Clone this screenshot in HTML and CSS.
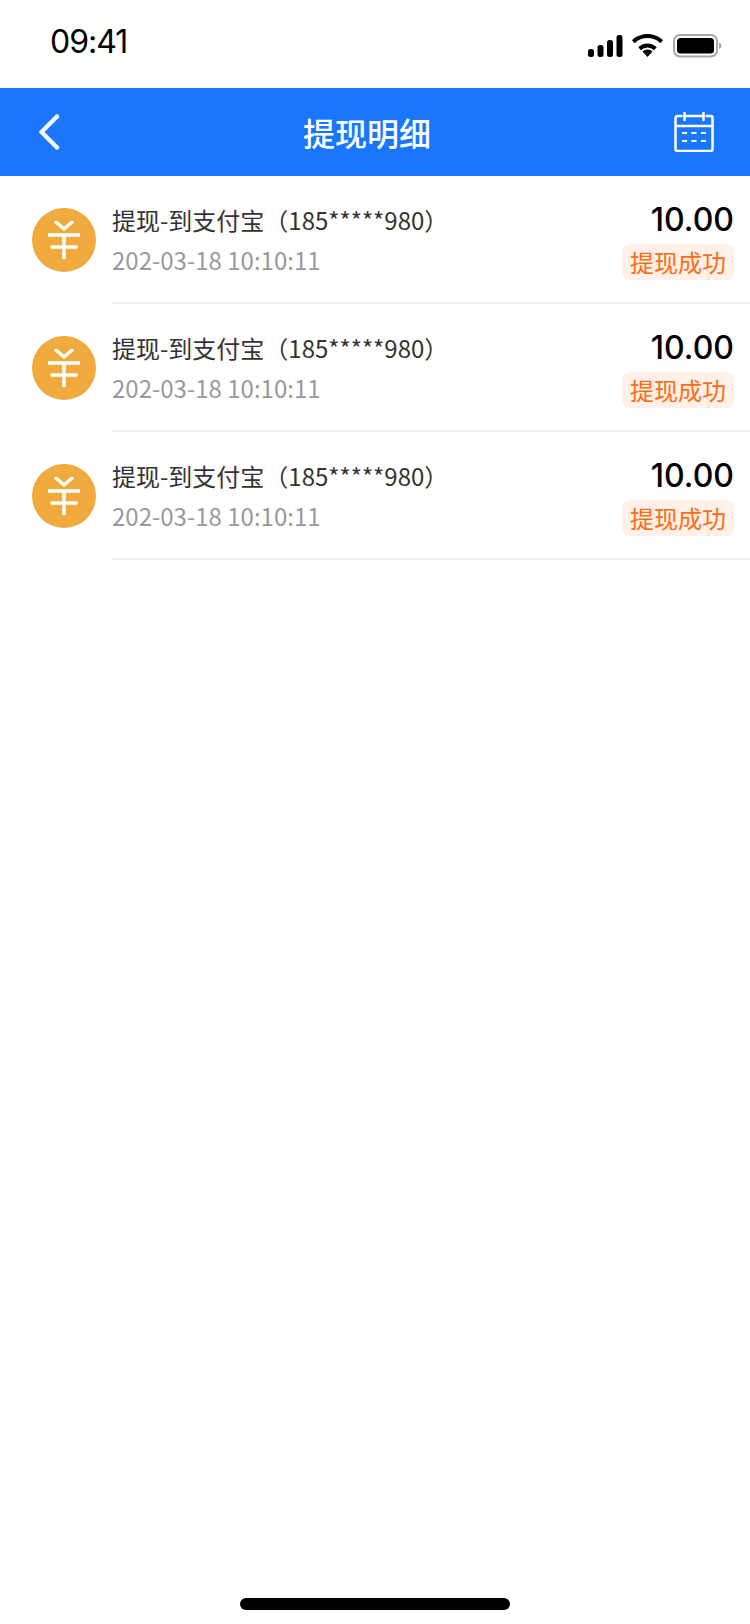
FILE: index.html
```html
<!DOCTYPE html>
<html lang="zh">
    <head>
        <meta charset="UTF-8">
        <title>提现明细</title>
        <link rel="stylesheet" href="styles.css">
    </head>
    <body>
        <div class="page">
            <div class="status">
                <span class="time">09:41</span>
                <div class="status-icons">
                    <svg class="signal" width="35" height="22" viewBox="0 0 35 22">
                        <rect x="0" y="14" width="6" height="8" rx="2.5"/>
                        <rect x="9.5" y="10" width="6" height="12" rx="2.5"/>
                        <rect x="19" y="5" width="6" height="17" rx="2.5"/>
                        <rect x="28.5" y="0" width="6" height="22" rx="2.5"/>
                    </svg>
                    <svg class="wifi" width="31" height="23" viewBox="0 0 31 23">
                        <path d="M15.5 23l-5-5.6a7.2 7.2 0 0 1 10 0z"/>
                        <path d="M15.5 9.6c3.6 0 6.8 1.4 9.2 3.7l-2.6 2.9a9.6 9.6 0 0 0-13.2 0l-2.6-2.9c2.4-2.3 5.6-3.7 9.2-3.7z"/>
                        <path d="M15.5 0c6 0 11.400 2.300 15.500 6.200l-2.700 3a18.600 18.600 0 0 0-25.600 0L0 6.200C4.100 2.300 9.500 0 15.500 0z"/>
                    </svg>
                    <svg class="battery" width="49" height="24" viewBox="0 0 49 24">
                        <rect x="1" y="1" width="43" height="21.500" rx="6" fill="none" stroke="#a8a8a8" stroke-width="2"/>
                        <rect x="4" y="4" width="37" height="15.500" rx="3.500"/>
                        <path d="M46 8.500c1.500.5 2.500 1.700 2.500 3.300s-1 2.700-2.500 3.200z" fill="#a8a8a8"/>
                    </svg>
                </div>
            </div>
            <div class="nav">
                <svg class="back" width="22" height="36" viewBox="0 0 22 36">
                    <path d="M19 2.500L3.500 18 19 33.500"/>
                </svg>
                <h1 class="nav-title">提现明细</h1>
                <svg class="calendar" width="40" height="40" viewBox="0 0 40 40">
                    <path class="cal-line" d="M7.500 4H3.500a2 2 0 0 0-2 2v31a2 2 0 0 0 2 2h33a2 2 0 0 0 2-2V6a2 2 0 0 0-2-2h-4M12.500 4h15M1.500 14h37M10.500 1v7M29.500 1v7"/>
                    <path class="cal-dash" d="M8 21h5M17.500 21h5M27 21h5M8 29h5M17.500 29h5M27 29h5"/>
                </svg>
            </div>
            <ul class="list">
                <li class="row">
                    <div class="coin">
                        <svg width="32" height="38" viewBox="0 0 32 38"><path d="M8 1l8 7 8-7M1 14h30M4 26h24M16 14v23"/></svg>
                    </div>
                    <div class="row-body">
                        <div class="row-left">
                            <p class="row-title">提现-到支付宝（185*****980）</p>
                            <p class="row-date">202-03-18 10:10:11</p>
                        </div>
                        <div class="row-right">
                            <span class="amount">10.00</span>
                            <span class="tag">提现成功</span>
                        </div>
                    </div>
                </li>
                <li class="row">
                    <div class="coin">
                        <svg width="32" height="38" viewBox="0 0 32 38"><path d="M8 1l8 7 8-7M1 14h30M4 26h24M16 14v23"/></svg>
                    </div>
                    <div class="row-body">
                        <div class="row-left">
                            <p class="row-title">提现-到支付宝（185*****980）</p>
                            <p class="row-date">202-03-18 10:10:11</p>
                        </div>
                        <div class="row-right">
                            <span class="amount">10.00</span>
                            <span class="tag">提现成功</span>
                        </div>
                    </div>
                </li>
                <li class="row">
                    <div class="coin">
                        <svg width="32" height="38" viewBox="0 0 32 38"><path d="M8 1l8 7 8-7M1 14h30M4 26h24M16 14v23"/></svg>
                    </div>
                    <div class="row-body">
                        <div class="row-left">
                            <p class="row-title">提现-到支付宝（185*****980）</p>
                            <p class="row-date">202-03-18 10:10:11</p>
                        </div>
                        <div class="row-right">
                            <span class="amount">10.00</span>
                            <span class="tag">提现成功</span>
                        </div>
                    </div>
                </li>
            </ul>
            <div class="home-bar"></div>
        </div>
    </body>
</html>
```

FILE: styles.css
```css
*{
    margin:0;
    padding:0;
    box-sizing:border-box;
}
ul,ol{
    list-style:none;
}
html,body{
    height:100%;
    background-color:#fff;
}
body{
    font-family:"Noto Sans CJK SC","Noto Sans",sans-serif;
}
.page{
    width:750px;
    height:1624px;
    display:flex;
    flex-direction:column;
}
.status{
    height:88px;
    display:flex;
    justify-content:space-between;
    align-items:flex-start;
    padding:0 28px 0 50px;
}
.time{
    font-family:Inter,"Noto Sans",sans-serif;
    font-size:32px;
    line-height:40px;
    margin-top:22px;
    letter-spacing:-1px;
    color:#000;
}
.status-icons{
    display:flex;
    align-items:flex-start;
    margin-top:34px;
}
.signal{
    margin:1px 9px 0 0;
}
.wifi{
    margin-right:10px;
}
.nav{
    height:88px;
    background-color:#1a76ff;
    display:flex;
    align-items:center;
    justify-content:space-between;
    padding:0 36px 0 38px;
}
.back path{
    fill:none;
    stroke:#f0f4fb;
    stroke-width:4.500;
    stroke-linecap:round;
    stroke-linejoin:round;
}
.nav-title{
    font-size:32px;
    font-weight:500;
    color:#fff;
    line-height:44px;
}
.calendar{
    fill:none;
    stroke:#fff;
}
.cal-line{
    stroke-width:2.500;
    stroke-linecap:round;
}
.cal-dash{
    stroke-width:2;
}
.row{
    height:128px;
    display:flex;
    padding-left:32px;
}
.coin{
    width:64px;
    height:64px;
    margin-top:32px;
    border-radius:50%;
    background-color:#f0aa3e;
    display:flex;
    align-items:center;
    justify-content:center;
    flex-shrink:0;
}
.coin svg{
    fill:none;
    stroke:#fff;
    stroke-width:3.500;
    stroke-linecap:round;
    stroke-linejoin:round;
}
.row-body{
    flex:1;
    margin-left:16px;
    padding:24px 16px 0 0;
    border-bottom:2px solid #f0f0f0;
    display:flex;
    justify-content:space-between;
}
.row-title{
    font-size:24px;
    line-height:40px;
    color:#333;
}
.row-date{
    font-size:24px;
    line-height:40px;
    color:#999;
}
.row-right{
    display:flex;
    flex-direction:column;
    align-items:flex-end;
}
.amount{
    font-family:Inter,"Noto Sans",sans-serif;
    font-size:32px;
    font-weight:500;
    line-height:40px;
    color:#000;
}
.tag{
    height:36px;
    line-height:36px;
    margin-top:4px;
    padding:0 8px;
    border-radius:8px;
    font-size:24px;
    color:#ff6a13;
    background-color:#fff1e8;
}
.home-bar{
    width:270px;
    height:12px;
    border-radius:6px;
    background-color:#000;
    margin:auto auto 14px;
}
```
